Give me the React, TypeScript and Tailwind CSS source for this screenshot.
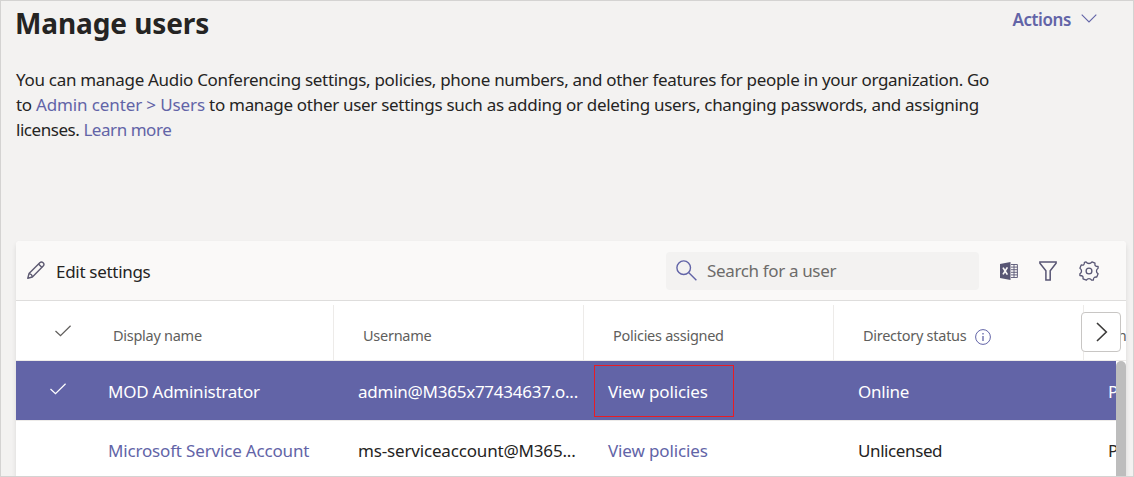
import { ReactNode } from "react";

function Check({ className }: { className: string }) {
  return (
    <svg viewBox="0 0 16 12" className={`h-3 w-4 shrink-0 ${className}`} fill="none" stroke="currentColor" strokeWidth="1.3">
      <path d="M0.5 6 L5.5 10.7 L15.6 0.8" />
    </svg>
  );
}

function PencilIcon() {
  return (
    <svg viewBox="0 0 18 18" className="-mt-[2px] h-[18px] w-[18px]" fill="none" stroke="#5d5a72" strokeWidth="1.4" strokeLinejoin="round">
      <path d="M0.8 17.2 L2 12.6 L12.8 1.7 C15 -0.4 18.3 2.8 16.2 5.1 L5.4 16 Z" />
      <path d="M11.5 3 L15 6.4 M2 12.6 C4 12.8 5.2 14 5.4 16" />
    </svg>
  );
}

function SearchIcon() {
  return (
    <svg viewBox="0 0 21 21" className="h-[21px] w-[21px]" fill="none" stroke="#6264a7" strokeWidth="1.4">
      <circle cx="7.7" cy="7.7" r="6.8" />
      <path d="M12.6 12.6 L20.4 20.2" />
    </svg>
  );
}

function ExcelIcon() {
  return (
    <svg viewBox="0 0 18 18" className="h-[18px] w-[18px]" fill="none">
      <path d="M0 2 L10.5 0 V18 L0 16 Z" fill="#585674" />
      <path d="M11 2.5 H17.4 V15.5 H11 M11 5.1 H17.4 M11 7.7 H17.4 M11 10.3 H17.4 M11 12.9 H17.4 M14 2.5 V15.5" stroke="#585674" strokeWidth="0.9" />
      <path d="M3 5.6 L7.4 12.6 M7.4 5.4 L3 12.4" stroke="#faf9f8" strokeWidth="1.7" />
    </svg>
  );
}

function FilterIcon() {
  return (
    <svg viewBox="0 0 18 20" className="h-5 w-[18px]" fill="none" stroke="#585674" strokeWidth="1.5">
      <path d="M0.9 1 H17.1 V2.2 L11.2 9.8 V19 H6.9 V9.8 L0.9 2.2 Z" />
    </svg>
  );
}

function GearIcon() {
  return (
    <svg viewBox="0 0 20 20" className="h-5 w-5" fill="none" stroke="#585674" strokeWidth="1.3" strokeLinejoin="round">
      <path d="M7 .9 C8.5 3 11.5 3 13 .9 L16 2.2 C15.6 4.5 16.4 5.5 19.1 5.5 V7.2 C16.9 8.6 16.9 11.4 19.1 12.8 L17.8 16 C15.2 15.8 14.4 16.8 14.4 19 L12.6 19.2 C11.3 17 8.7 17 7.4 19.2 L4 17.8 C4.4 15.4 3.6 14.5 .9 14.5 V12.8 C3.1 11.4 3.1 8.6 .9 7.2 L2.2 4 C4.6 4.4 5.5 3.6 5.4 1.3 Z" />
      <circle cx="10" cy="10" r="2.9" />
    </svg>
  );
}

function InfoIcon() {
  return (
    <svg viewBox="0 0 16 16" className="h-4 w-4" fill="none" stroke="#6264a7">
      <circle cx="8" cy="8" r="7.4" />
      <path d="M8 7 V12 M8 4 V5.6" strokeWidth="1.3" />
    </svg>
  );
}

function HeaderCell({ children }: { children: ReactNode }) {
  return (
    <div className="mt-1 flex w-[250px] shrink-0 items-center border-r border-[#edebe9] pt-[7px] pl-[29px] text-[14.5px] tracking-[-0.27px] text-[#605e5c]">
      {children}
    </div>
  );
}

function Cell({ children, className = "" }: { children: ReactNode; className?: string }) {
  return <div className={`w-[250px] shrink-0 pl-6 ${className}`}>{children}</div>;
}

export default function App() {
  return (
    <main className="flex h-[477px] w-[1134px] flex-col overflow-hidden border border-[#d4d3d2] bg-[#f3f2f1] pr-[7px] pl-[15px] font-['Noto_Sans','Open_Sans',sans-serif] text-[#252423]">
      <header className="flex h-[66px] justify-between">
        <h1 className="-ml-[1px] pt-[3px] text-[28px] leading-[38px] font-bold tracking-[-0.1px]">Manage users</h1>
        <button className="flex h-[38px] items-center gap-[10px] pr-[29px] text-[17px] font-semibold tracking-[-0.4px] text-[#6264a7]">
          Actions
          <svg viewBox="0 0 16 9" className="mb-1 h-[9px] w-4" fill="none" stroke="currentColor" strokeWidth="1.1">
            <path d="M0.7 0.7 L8 8 L15.3 0.7" />
          </svg>
        </button>
      </header>

      <p className="h-[174px] text-[17px] leading-[25px] tracking-[-0.3px] whitespace-nowrap">
        You can manage Audio Conferencing settings, policies, phone numbers, and other features for people in your organization. Go
        <br />
        to <a className="tracking-[-0.12px] text-[#6264a7]">Admin center &gt; Users</a> to manage other user settings such as adding or deleting users, changing passwords, and assigning
        <br />
        <span className="tracking-[-0.45px]">
          licenses. <a className="text-[#6264a7]">Learn more</a>
        </span>
      </p>

      <section className="flex flex-1 flex-col overflow-hidden rounded-t bg-white shadow-[0_3px_5px_rgba(0,0,0,0.1)]">
        <div className="flex h-[60px] shrink-0 items-center border-b border-[#dedddc] bg-[#faf9f8] pr-[27px] pl-[11px]">
          <PencilIcon />
          <span className="ml-[11px] pt-[2px] text-[17px] tracking-[-0.3px]">Edit settings</span>
          <div className="ml-auto flex h-[38px] w-[313px] items-center gap-[10px] rounded bg-[#f3f2f1] pl-[10px]">
            <SearchIcon />
            <span className="pt-[1px] text-[17px] tracking-[-0.35px] text-[#6d6b69]">Search for a user</span>
          </div>
          <div className="ml-[21px] flex items-center gap-[21px]">
            <ExcelIcon />
            <FilterIcon />
            <span className="ml-[1px]"><GearIcon /></span>
          </div>
        </div>

        <div className="relative flex h-[60px] shrink-0 overflow-hidden border-b border-[#edebe9]">
          <div className="flex w-[68px] shrink-0 items-center pl-[39px]">
            <Check className="text-[#605e5c]" />
          </div>
          <HeaderCell>Display name</HeaderCell>
          <HeaderCell>Username</HeaderCell>
          <HeaderCell>Policies assigned</HeaderCell>
          <HeaderCell>
            Directory status
            <span className="ml-[9px] pt-[1px]"><InfoIcon /></span>
          </HeaderCell>
          <div className="mt-1 flex items-center pt-[7px] pl-[29px] text-[14.5px] text-[#605e5c]">
            <span className="-ml-[4px]">Phone</span>
          </div>
          <button className="absolute top-[11px] right-[5px] flex h-10 w-10 items-center justify-center rounded border border-[#c8c6c4] bg-white pl-[1px]">
            <svg viewBox="0 0 12 20" className="h-5 w-3" fill="none" stroke="#3b3a39" strokeWidth="1.6">
              <path d="M1 1 L10.3 10 L1 19" />
            </svg>
          </button>
        </div>

        <div className="flex min-h-0 flex-1">
          <div className="w-[1100px] shrink-0 overflow-hidden text-[17px] tracking-[-0.25px]">
            <div className="flex h-[60px] items-center overflow-hidden border-b border-[#edebe9] bg-[#6264a7] bg-clip-padding pt-[2px] text-white">
              <div className="w-[68px] shrink-0 pb-[6px] pl-[34px]">
                <Check className="text-white" />
              </div>
              <Cell>MOD Administrator</Cell>
              <Cell>admin@M365x77434637.o...</Cell>
              <div className="relative w-[250px] shrink-0 pl-6 tracking-[-0.12px]">
                <span className="absolute -top-[14px] left-[10px] h-[52px] w-[140px] border border-[#e81c24]" />
                View policies
              </div>
              <Cell>Online</Cell>
              <Cell>Phone</Cell>
            </div>
            <div className="flex h-[60px] items-center overflow-hidden">
              <div className="w-[68px] shrink-0" />
              <Cell className="tracking-[-0.17px]"><a className="text-[#6264a7]">Microsoft Service Account</a></Cell>
              <Cell className="tracking-[-0.17px]">ms-serviceaccount@M365...</Cell>
              <Cell className="tracking-[-0.12px]"><a className="text-[#6264a7]">View policies</a></Cell>
              <Cell className="tracking-[-0.4px]">Unlicensed</Cell>
              <Cell>Phone</Cell>
            </div>
          </div>
          <div className="w-[10px] rounded-t-[5px] bg-[#bdbdbd]" />
        </div>
      </section>
    </main>
  );
}
